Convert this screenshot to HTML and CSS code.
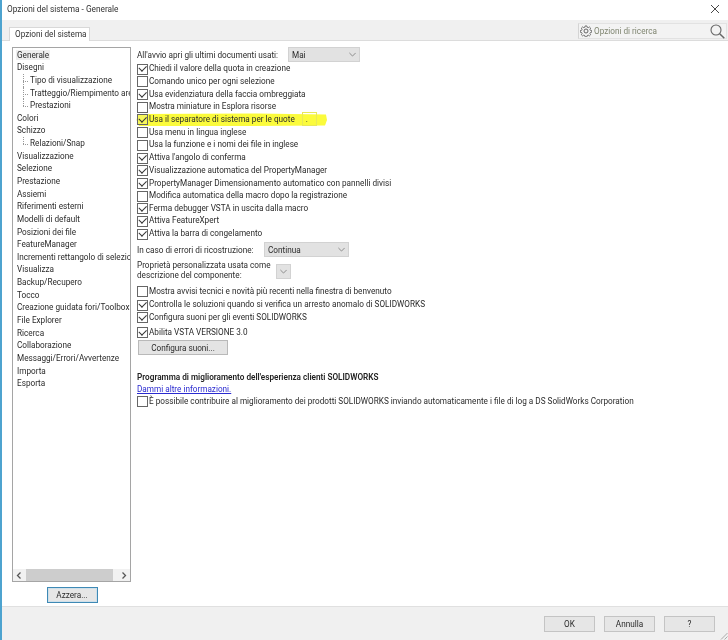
FILE: index.html
```html
<!DOCTYPE html>
<html lang="it">
<head>
<meta charset="utf-8">
<title>Opzioni del sistema - Generale</title>
<link rel="stylesheet" href="styles.css">
</head>
<body>
<div class="window">
  <header class="titlebar">
    <span class="title">Opzioni del sistema - Generale</span>
    <svg class="close" width="10" height="10" viewBox="0 0 10 10"><path d="M1 1l8 8M9 1l-8 8" stroke="#333" stroke-width="0.9" fill="none"/></svg>
  </header>
  <div class="tabstrip">
    <div class="tab">Opzioni del sistema</div>
    <div class="search">
      <svg class="gear" width="12" height="12" viewBox="0 0 24 24" fill="none" stroke="#555" stroke-width="1.8"><path d="M10 1.500h4l.6 3 2.400 1 2.600-1.700 2.800 2.800-1.700 2.600 1 2.400 3 .6v4l-3 .6-1 2.400 1.700 2.600-2.800 2.800-2.600-1.700-2.400 1-.6 3h-4l-.6-3-2.400-1-2.600 1.700-2.800-2.800 1.700-2.600-1-2.400-3-.6v-4l3-.6 1-2.400-1.700-2.600 2.800-2.800 2.600 1.700 2.400-1z" transform="translate(1.200 .6) scale(.9 .86)"/><circle cx="12" cy="12" r="4"/></svg>
      <span class="search-label">Opzioni di ricerca</span>
      <svg class="lens" width="15" height="15" viewBox="0 0 15 15" fill="none" stroke="#666" stroke-width="1.100"><circle cx="6" cy="6" r="5"/><path d="M9.700 9.700l4.600 4.600" stroke-width="1.500"/></svg>
    </div>
  </div>
  <main class="content">
    <aside class="side">
      <div class="tree-box">
        <ul class="tree">
          <li class="selected"><span>Generale</span></li>
          <li>Disegni</li>
          <li class="child">Tipo di visualizzazione</li>
          <li class="child">Tratteggio/Riempimento aree</li>
          <li class="child last">Prestazioni</li>
          <li>Colori</li>
          <li>Schizzo</li>
          <li class="child last">Relazioni/Snap</li>
          <li>Visualizzazione</li>
          <li>Selezione</li>
          <li>Prestazione</li>
          <li>Assiemi</li>
          <li>Riferimenti esterni</li>
          <li>Modelli di default</li>
          <li>Posizioni dei file</li>
          <li>FeatureManager</li>
          <li>Incrementi rettangolo di selezione</li>
          <li>Visualizza</li>
          <li>Backup/Recupero</li>
          <li>Tocco</li>
          <li>Creazione guidata fori/Toolbox</li>
          <li>File Explorer</li>
          <li>Ricerca</li>
          <li>Collaborazione</li>
          <li>Messaggi/Errori/Avvertenze</li>
          <li>Importa</li>
          <li>Esporta</li>
        </ul>
        <div class="hscroll">
          <svg width="12" height="11" viewBox="0 0 12 11" fill="none" stroke="#555" stroke-width="1.300"><path d="M7.500 2.500L4.500 5.500l3 3"/></svg>
          <div class="thumb"></div>
          <svg width="12" height="11" viewBox="0 0 12 11" fill="none" stroke="#555" stroke-width="1.300"><path d="M4.500 2.500l3 3-3 3"/></svg>
        </div>
      </div>
      <button class="btn reset">Azzera...</button>
    </aside>
    <section class="options">
      <div class="line first">
        <span class="lbl-open">All'avvio apri gli ultimi documenti usati:</span>
        <div class="select sel-mai"><span>Mai</span><svg width="7" height="5" viewBox="0 0 9 6" fill="none" stroke="#777"><path d="M.5 1l4 4 4-4"/></svg></div>
      </div>
      <label class="check on">Chiedi il valore della quota in creazione</label>
      <label class="check">Comando unico per ogni selezione</label>
      <label class="check on">Usa evidenziatura della faccia ombreggiata</label>
      <label class="check">Mostra miniature in Esplora risorse</label>
      <div class="check on marked">
        <svg class="marker" width="192" height="15" viewBox="0 0 192 15"><path d="M2 2L120 1.500 190 2.500 191 8 189 13.500 100 14 3 14 .5 8z" fill="#fbfb3c"/></svg>
        <span class="marked-text">Usa il separatore di sistema per le quote</span>
        <span class="sep">.</span>
      </div>
      <label class="check">Usa menu in lingua inglese</label>
      <label class="check">Usa la funzione e i nomi dei file in inglese</label>
      <label class="check on angle">Attiva l'angolo di conferma</label>
      <label class="check on">Visualizzazione automatica del PropertyManager</label>
      <label class="check on">PropertyManager Dimensionamento automatico con pannelli divisi</label>
      <label class="check">Modifica automatica della macro dopo la registrazione</label>
      <label class="check on">Ferma debugger VSTA in uscita dalla macro</label>
      <label class="check on">Attiva FeatureXpert</label>
      <label class="check on">Attiva la barra di congelamento</label>
      <div class="line errors">
        <span class="lbl-err">In caso di errori di ricostruzione:</span>
        <div class="select sel-cont"><span>Continua</span><svg width="7" height="5" viewBox="0 0 9 6" fill="none" stroke="#777"><path d="M.5 1l4 4 4-4"/></svg></div>
      </div>
      <div class="line prop">
        <span class="lbl-prop">Proprietà personalizzata usata come<br>descrizione del componente:</span>
        <div class="select sel-empty"><svg width="7" height="5" viewBox="0 0 9 6" fill="none" stroke="#777"><path d="M.5 1l4 4 4-4"/></svg></div>
      </div>
      <label class="check tip">Mostra avvisi tecnici e novità più recenti nella finestra di benvenuto</label>
      <label class="check on crash">Controlla le soluzioni quando si verifica un arresto anomalo di SOLIDWORKS</label>
      <label class="check on">Configura suoni per gli eventi SOLIDWORKS</label>
      <label class="check on vsta">Abilita VSTA VERSIONE 3.0</label>
      <button class="btn sounds">Configura suoni...</button>
      <h2 class="program">Programma di miglioramento dell'esperienza clienti SOLIDWORKS</h2>
      <a class="more" href="#">Dammi altre informazioni.</a>
      <label class="check">È possibile contribuire al miglioramento dei prodotti SOLIDWORKS inviando automaticamente i file di log a DS SolidWorks Corporation</label>
    </section>
  </main>
  <footer class="footer">
    <button class="btn act">OK</button>
    <button class="btn act">Annulla</button>
    <button class="btn act">?</button>
    <svg class="grip" width="8" height="8" viewBox="0 0 8 8" stroke="#aaa"><path d="M7.500 1L1 7.500M7.500 4.500L4.500 7.500"/></svg>
  </footer>
</div>
</body>
</html>
```
FILE: styles.css
```css
* { box-sizing: border-box; }
html, body { margin: 0; padding: 0; }
body {
  width: 728px;
  height: 640px;
  overflow: hidden;
  background: #fff;
  font-family: Roboto, "Open Sans", sans-serif;
  font-size: 8.2px;
  color: #2b2b2b;
  filter: blur(0.35px);
}
.window {
  width: 728px;
  height: 640px;
  display: flex;
  flex-direction: column;
  border-left: 2px solid #4da3cf;
}
.titlebar {
  height: 20px;
  flex: none;
  display: flex;
  align-items: center;
  justify-content: space-between;
  padding: 0 8px 2px 5px;
  background: #fff;
}
.title { font-size: 8.3px; color: #333; }
.tabstrip {
  height: 21px;
  flex: none;
  display: flex;
  justify-content: space-between;
  align-items: flex-start;
  background: #f0f0f0;
  border-bottom: 1px solid #dcdcdc;
  padding: 7px 1px 0 7px;
}
.tab {
  width: 81px;
  height: 14px;
  background: #fff;
  border: 1px solid #d8d8d8;
  border-bottom: none;
  padding-left: 5px;
  line-height: 13px;
  color: #333;
  white-space: nowrap;
}
.search {
  width: 149px;
  height: 16px;
  margin-top: -4px;
  display: flex;
  align-items: center;
  gap: 2px;
  padding: 0 1px 0 1px;
  border: 1px solid #e2e2e2;
  border-left-color: #d4d4d4;
  background: #f3f3f3;
}
.search-label { flex: 1; color: #7f8570; }
.content {
  flex: 1;
  min-height: 0;
  display: flex;
  background: #fff;
  margin-left: 6px;
  padding: 6px 0 0 4px;
}
.side {
  width: 119px;
  flex: none;
  display: flex;
  flex-direction: column;
  align-items: center;
}
.tree-box {
  width: 119px;
  height: 535px;
  flex: none;
  display: flex;
  flex-direction: column;
  border: 1px solid #a5a5a5;
  background: #fff;
  overflow: hidden;
}
.tree {
  flex: 1;
  list-style: none;
  margin: 0;
  padding: 0.6px 0 0 4px;
  line-height: 12.65px;
  white-space: nowrap;
  overflow: hidden;
}
.tree li { height: 12.65px; position: relative; }
.selected span { background: #eeeeee; padding: 0 1px; margin-left: -1px; }
.child { padding-left: 13px; }
.child::before {
  content: "";
  position: absolute;
  left: 6px;
  top: 0;
  width: 5px;
  height: 100%;
  border-left: 1px dotted #999;
}
.child::after {
  content: "";
  position: absolute;
  left: 6px;
  top: 7px;
  width: 5px;
  border-top: 1px dotted #999;
}
.child.last::before { height: 7px; }
.hscroll {
  height: 12px;
  flex: none;
  display: flex;
  align-items: center;
  background: #f1f1f1;
}
.thumb { flex: 1; height: 12px; background: #cdcdcd; }
.hscroll svg { flex: none; }
.hscroll svg:last-child { margin-left: 5px; }
.hscroll .thumb { margin-left: 1px; }
.btn {
  font: inherit;
  color: #2b2b2b;
  background: #e4e4e4;
  border: 1px solid #b9b9b9;
  padding: 0;
}
.reset {
  width: 51px;
  height: 16px;
  margin-top: 5px;
  margin-left: 1px;
  background: #e6e6e6;
  border: 1px solid #3e89b5;
  box-shadow: inset 0 0 0 1px #cfe0ea;
}
.options {
  flex: 1;
  min-width: 0;
  padding-left: 6px;
  display: flex;
  flex-direction: column;
  align-items: flex-start;
  white-space: nowrap;
}
.line { display: flex; align-items: center; }
.first { height: 15px; margin-top: 0.3px; }
.lbl-open { width: 151px; }
.select {
  display: flex;
  align-items: center;
  justify-content: space-between;
  background: #e2e2e2;
  border: 1px solid #d2d2d2;
  padding: 0 3px 0 3px;
}
.sel-mai { width: 72px; height: 15px; }
.check {
  position: relative;
  display: block;
  height: 12.65px;
  line-height: 12.65px;
  padding-left: 12px;
}
.check::before {
  content: "";
  position: absolute;
  left: 0;
  top: 1.500px;
  width: 9px;
  height: 9px;
  background: #fff;
  border: 1px solid #666;
}
.check.on::after {
  content: "";
  position: absolute;
  left: 1.800px;
  top: 3px;
  width: 6px;
  height: 3.500px;
  border-left: 1px solid #333;
  border-bottom: 1px solid #333;
  transform: rotate(-45deg);
}
.angle { margin-top: 0.5px; }
.marked { display: flex; }
.marker { position: absolute; left: -1px; top: -1px; }
.marked::before, .marked::after { z-index: 1; }
.marked::before { background: #f8f85a; }
.marked-text, .sep { position: relative; }
.sep {
  width: 15px;
  margin-left: 7px;
  padding-left: 3px;
  margin-top: -1px;
  height: 14px;
  border: 1px solid #e9e958;
}
.errors { margin-top: 2px; height: 16px; }
.lbl-err { width: 127px; }
.sel-cont { width: 85px; height: 15px; padding-right: 3px; }
.prop { margin-top: 2px; height: 25.7px; line-height: 10px; align-items: flex-start; }
.lbl-prop { width: 139px; }
.sel-empty { width: 15px; height: 15px; justify-content: center; padding: 0; margin-top: 4px; }
.tip { margin-top: -0.7px; }
.crash { margin-top: 0.8px; }
.vsta { margin-top: 2.500px; }
.sounds { width: 90px; height: 15px; margin-top: 1.700px; margin-left: 1px; }
.program {
  margin: 15.500px 0 0 0;
  font: inherit;
  font-weight: 600;
  line-height: 12px;
  color: #222;
}
.more { line-height: 12px; color: #2a2ad0; }
.footer {
  height: 34px;
  flex: none;
  position: relative;
  display: flex;
  justify-content: flex-end;
  align-items: center;
  gap: 9px;
  padding: 1px 13px 0 0;
  background: #f0f0f0;
  border-top: 1px solid #e0e0e0;
}
.act { width: 51px; height: 16px; background: #e6e6e6; border: 1px solid #c4c4c4; }
.grip { position: absolute; right: 0; bottom: 0; }
```
